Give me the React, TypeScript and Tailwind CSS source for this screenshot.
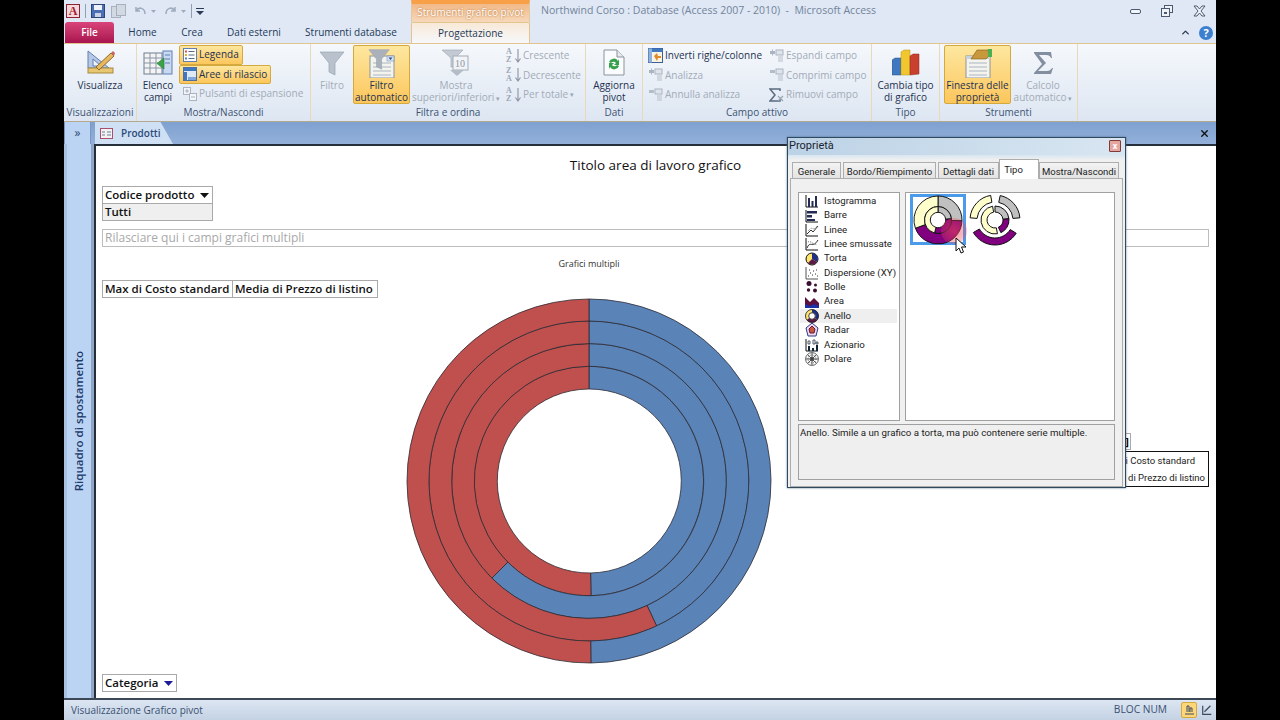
import React from 'react';
import { ChevronUp, X } from 'lucide-react';

const FONT = "font-['Open_Sans','Noto_Sans',sans-serif]";

// ─── Donut geometry ─────────────────────────────────────────────────────────

function arc(cx: number, cy: number, r0: number, r1: number, a0: number, a1: number): string {
  const pt = (r: number, a: number) => {
    const t = ((a - 90) * Math.PI) / 180;
    return `${(cx + r * Math.cos(t)).toFixed(2)} ${(cy + r * Math.sin(t)).toFixed(2)}`;
  };
  const large = a1 - a0 > 180 ? 1 : 0;
  return `M${pt(r1, a0)}A${r1} ${r1} 0 ${large} 1 ${pt(r1, a1)}L${pt(r0, a1)}A${r0} ${r0} 0 ${large} 0 ${pt(r0, a0)}Z`;
}

const RINGS = [
  { r0: 92, r1: 114.7, split: 179 },
  { r0: 114.7, r1: 137.4, split: 225 },
  { r0: 137.4, r1: 160, split: 155 },
  { r0: 160, r1: 182, split: 179.4 },
];

function PivotDonut() {
  return (
    <svg width="368" height="368" viewBox="0 0 368 368">
      {RINGS.map((ring) => (
        <g key={ring.r0} stroke="#2c2a33" strokeWidth="0.8">
          <path d={arc(184, 184, ring.r0, ring.r1, 0, ring.split)} fill="#5a84b8" />
          <path d={arc(184, 184, ring.r0, ring.r1, ring.split, 360)} fill="#c0504d" />
        </g>
      ))}
    </svg>
  );
}

const Y = '#ffffcc';
const P = '#800080';
const S = '#c0c0c0';

function MiniDonut() {
  return (
    <svg width="50" height="50" viewBox="0 0 52 52">
      <g stroke="#111" strokeWidth="1">
        <path d={arc(26, 26, 14, 25, 0, 92)} fill={S} />
        <path d={arc(26, 26, 14, 25, 92, 250)} fill={P} />
        <path d={arc(26, 26, 14, 25, 250, 360)} fill={Y} />
        <path d={arc(26, 26, 8, 14, 0, 85)} fill={S} />
        <path d={arc(26, 26, 8, 14, 85, 195)} fill={P} />
        <path d={arc(26, 26, 8, 14, 195, 360)} fill={Y} />
      </g>
    </svg>
  );
}

function ExplodedDonut() {
  return (
    <svg width="52" height="52" viewBox="0 0 52 52">
      <g stroke="#111" strokeWidth="1">
        <path d={arc(26, 26, 18, 25, 12, 85)} fill={S} />
        <path d={arc(26, 26, 18, 25, 122, 240)} fill={P} />
        <path d={arc(26, 26, 18, 25, 275, 350)} fill={Y} />
        <path d={arc(26, 26, 8, 14, 0, 85)} fill={S} />
        <path d={arc(26, 26, 8, 14, 85, 155)} fill={P} />
        <path d={arc(26, 26, 8, 14, 170, 350)} fill={Y} />
      </g>
    </svg>
  );
}

// ─── Ribbon icons ───────────────────────────────────────────────────────────

const Funnel = ({ c = '#b9c2cc' }: { c?: string }) => (
  <path d="M1 2h24l-9 11v12l-6-3v-9z" fill={c} stroke="#98a3b0" strokeWidth="0.7" />
);

const Sheet = () => (
  <g>
    <rect x="3" y="8" width="24" height="22" fill="#f4f4ef" stroke="#8d949c" />
    <path d="M6 15h18M6 19h18M6 23h18M6 27h18" stroke="#aab4c2" />
  </g>
);

const VisualizzaIcon = () => (
  <svg width="30" height="30" viewBox="0 0 30 30">
    <path d="M3 3l21 17H3z" fill="#b6c8e4" stroke="#5f7fb5" />
    <path d="M8 11l8 7H8z" fill="#eef3fa" stroke="#5f7fb5" />
    <rect x="3" y="20" width="25" height="5" fill="#e8c773" stroke="#a88a3e" />
    <path d="M11 19L26 5l3 3-15 14z" fill="#e9b85c" stroke="#8a6a2c" />
    <path d="M26 5l3 3 1-3-2-2z" fill="#c66" />
  </svg>
);

const ElencoIcon = () => (
  <svg width="30" height="28" viewBox="0 0 30 28">
    <rect x="1" y="4" width="18" height="21" fill="#f4f4f4" stroke="#6f7c8c" />
    <path d="M1 9h18M1 14h18M1 19h18M7 4v21M13 4v21" stroke="#8995a5" />
    <rect x="20" y="2" width="9" height="23" fill="#c9daf0" stroke="#5f7fb5" />
    <path d="M22 6h5M22 10h5M22 14h5" stroke="#5f7fb5" />
    <path d="M21 9v11l-7-5.5z" fill="#3aa34a" stroke="#1f7a30" strokeWidth="0.6" />
  </svg>
);

const LegendaIcon = () => (
  <svg width="14" height="14" viewBox="0 0 14 14">
    <rect x="0.5" y="0.5" width="13" height="13" fill="#fff" stroke="#5f7fb5" />
    <rect x="2" y="2.5" width="2" height="2" fill="#d9534f" />
    <rect x="2" y="6" width="2" height="2" fill="#e9b12f" />
    <rect x="2" y="9.5" width="2" height="2" fill="#4f81bd" />
    <path d="M5.5 3.5h6M5.5 7h6M5.5 10.5h6" stroke="#5a6a80" />
  </svg>
);

const AreeIcon = () => (
  <svg width="14" height="14" viewBox="0 0 14 14">
    <rect x="0.5" y="0.5" width="13" height="13" fill="#dfe9f6" stroke="#4f6f9f" />
    <rect x="1" y="1" width="12" height="3" fill="#3f78c0" />
    <rect x="1" y="5" width="3" height="8" fill="#3f78c0" />
    <rect x="5" y="10" width="8" height="3" fill="#7ea6d8" />
  </svg>
);

const ExpandIcon = () => (
  <svg width="14" height="14" viewBox="0 0 14 14" fill="#f3f5f8" stroke="#aab3bf">
    <rect x="0.5" y="0.5" width="7" height="7" />
    <rect x="6.5" y="6.5" width="7" height="7" />
    <path d="M2 4h4M4 2v4M8 10h4" />
  </svg>
);

const SortIcon = ({ top, bottom }: { top: string; bottom: string }) => (
  <span className="relative flex h-4 w-[15px] flex-col items-start font-['Liberation_Serif',serif] text-[8px] font-bold leading-[8px] text-[#9ba6b5]">
    <span>{top}</span>
    <span>{bottom}</span>
    <svg className="absolute right-0 top-0" width="6" height="16" viewBox="0 0 6 16">
      <path d="M3 1v12M0.5 10.5L3 14l2.5-3.5" fill="none" stroke="#8b95a3" strokeWidth="1.1" />
    </svg>
  </span>
);

const PivotFieldIcon = ({ plain }: { plain?: boolean }) => (
  <svg width="15" height="14" viewBox="0 0 15 14">
    <path d="M1 2h5v3H1z" fill={plain ? '#b3bcc8' : '#aab4c2'} />
    {!plain && <path d="M3.5 0.5v6M1 3.5h5" stroke="#aab4c2" />}
    <rect x="7" y="1" width="7" height="5" fill="#dfe4ea" stroke="#aab4c2" />
    <path d="M9 8h5M9 10h5M9 12h5" stroke="#b7bfca" />
  </svg>
);

const InvertIcon = () => (
  <svg width="15" height="15" viewBox="0 0 15 15">
    <rect x="0.5" y="0.5" width="14" height="14" fill="#f8f3e3" stroke="#3a5f94" />
    <rect x="0.5" y="0.5" width="14" height="3.5" fill="#3f78c0" />
    <rect x="0.5" y="0.5" width="3.5" height="14" fill="#8fb2de" />
    <path d="M6 8l3-3 1 3h3v2h-3l-1 3z" fill="#e08a2c" />
  </svg>
);

const RemoveFieldIcon = () => (
  <svg width="15" height="14" viewBox="0 0 15 14">
    <path d="M11 3V1H1l5 6-5 6h10v-2" fill="none" stroke="#5a6a80" strokeWidth="1.5" />
    <path d="M9 8l5 5M14 8l-5 5" stroke="#9aa5b3" strokeWidth="1.2" />
  </svg>
);

const TopTenIcon = () => (
  <svg width="30" height="28" viewBox="0 0 30 28">
    <path d="M1 1h21l-8 8v9h-4V9z" fill="#c3cad3" stroke="#a2acb8" strokeWidth="0.7" />
    <rect x="12" y="7" width="15" height="14" fill="#f1f3f6" stroke="#a2acb8" />
    <text x="14" y="18" fontSize="10" fontFamily="Liberation Serif, serif" fill="#8b95a3">
      10
    </text>
    <path d="M9 21h14l-7 6z" fill="#b4bcc7" />
  </svg>
);

const RefreshIcon = () => (
  <svg width="24" height="27" viewBox="0 0 24 27">
    <path d="M2 1h13l7 7v18H2z" fill="#fafbfc" stroke="#8b939c" />
    <path d="M15 1v7h7" fill="#e6e9ed" stroke="#8b939c" />
    <path d="M7 13a5 5 0 0 1 9-1l1-2v6h-5l2-2a3 3 0 0 0-5 0z" fill="#35a04a" />
    <path d="M17 17a5 5 0 0 1-9 1l-1 2v-6h5l-2 2a3 3 0 0 0 5 0z" fill="#35a04a" />
  </svg>
);

const ChartTypeIcon = () => (
  <svg width="28" height="28" viewBox="0 0 28 28">
    <path d="M0 11l3-2h6v17H0z" fill="#3f78c0" stroke="#2b5288" strokeWidth="0.5" />
    <path d="M9 3l3-2h6v25H9z" fill="#f1c62f" stroke="#b0901a" strokeWidth="0.5" />
    <path d="M18 7l3-2h6v20l-9 1z" fill="#c9402f" stroke="#8a2a1f" strokeWidth="0.5" />
  </svg>
);

const PropertySheetIcon = () => (
  <svg width="30" height="30" viewBox="0 0 30 30">
    <Sheet />
    <rect x="3" y="8" width="24" height="3" fill="#c9d2dc" />
    <path d="M8 11l6-9h11l1 6-3 3z" fill="#c8983c" stroke="#7d5d1e" strokeWidth="0.6" />
    <rect x="25" y="1" width="4" height="8" fill="#4caf50" />
  </svg>
);

const FilterAutoIcon = () => (
  <svg width="30" height="30" viewBox="0 0 30 30">
    <Sheet />
    <rect x="20" y="8" width="7" height="5" fill="#dbe6f4" stroke="#5f7fb5" strokeWidth="0.5" />
    <path d="M21.5 9.5h4L23.5 12z" fill="#2d4f86" />
    <g transform="translate(1 0) scale(0.85)">
      <Funnel c="#aab1ba" />
    </g>
  </svg>
);

const SigmaIcon = () => (
  <svg width="20" height="24" viewBox="0 0 20 24">
    <path d="M1 1h17l1 6h-1c-1-2-2-3-5-3H6l7 8-8 8h9c2 0 4-1 5-3h1l-2 6H1v-1l8-9L1 2z" fill="#838ea0" />
  </svg>
);

function TypeIcon({ kind }: { kind: string }) {
  const k = '#111';
  const common = { width: 14, height: 14, viewBox: '0 0 14 14' };
  switch (kind) {
    case 'Istogramma':
      return (
        <svg {...common}>
          <path d="M1 1v12h12" fill="none" stroke={k} />
          <path d="M3 4h2v9H3zM6.5 7h2v6h-2zM10 2h2v11h-2z" fill="#222a55" />
        </svg>
      );
    case 'Barre':
      return (
        <svg {...common}>
          <path d="M1 1v12h12" fill="none" stroke={k} />
          <path d="M2 2h10v2.500H2zM2 6h5v2.500H2zM2 10h8v2H2z" fill="#222a55" />
        </svg>
      );
    case 'Linee':
      return (
        <svg {...common}>
          <path d="M1 1v12h12" fill="none" stroke={k} />
          <path d="M2 11l4-4 2 2 5-6" fill="none" stroke="#333" />
          <path d="M3 8l3-3 3 1 3-3" fill="none" stroke="#777" strokeDasharray="1 1" />
        </svg>
      );
    case 'Linee smussate':
      return (
        <svg {...common}>
          <path d="M1 1v12h12" fill="none" stroke={k} />
          <path d="M2 11C5 3 8 12 13 3" fill="none" stroke="#333" />
          <path d="M3 5c3-2 6 4 9 2" fill="none" stroke="#777" strokeDasharray="1 1" />
        </svg>
      );
    case 'Torta':
      return (
        <svg {...common}>
          <circle cx="7" cy="7" r="6" fill="#ffe66a" stroke={k} />
          <path d="M7 7V1a6 6 0 0 1 5 9z" fill="#1f2f86" />
          <path d="M7 7l5 3a6 6 0 0 1-9 1z" fill="#5c1a4a" />
        </svg>
      );
    case 'Dispersione (XY)':
      return (
        <svg {...common}>
          <path d="M1 1v12h12" fill="none" stroke="#555" />
          <path d="M3 10h1M5 7h1M7 9h1M8 5h1M11 4h1M10 8h1M4 4h1M12 10h1" stroke="#333" strokeDasharray="1 1" />
        </svg>
      );
    case 'Bolle':
      return (
        <svg {...common}>
          <circle cx="4" cy="3.500" r="2.500" fill="#3a1030" />
          <circle cx="10.500" cy="5" r="1.500" fill="#3a1030" />
          <circle cx="3.500" cy="10" r="1.700" fill="#3a1030" />
          <circle cx="10" cy="10.500" r="2" fill="#3a1030" />
        </svg>
      );
    case 'Area':
      return (
        <svg {...common}>
          <path d="M0 13V2l5 5 4-4 5 5v5z" fill="#5c1040" />
          <path d="M0 13V9l5 2 4-2 5 2v2z" fill="#1a2fa8" />
        </svg>
      );
    case 'Anello':
      return (
        <svg {...common}>
          <circle cx="7" cy="7" r="5" fill="none" stroke="#ffe66a" strokeWidth="3" />
          <path d="M7 2a5 5 0 0 1 4 8" fill="none" stroke="#1f2f86" strokeWidth="3" />
          <path d="M11 10a5 5 0 0 1-8 0" fill="none" stroke="#5c1a4a" strokeWidth="3" />
          <circle cx="7" cy="7" r="6.500" fill="none" stroke={k} strokeWidth="0.8" />
          <circle cx="7" cy="7" r="3.300" fill="#fff" stroke={k} strokeWidth="0.8" />
        </svg>
      );
    case 'Radar':
      return (
        <svg {...common}>
          <path d="M7 0l6 5-2 8H3L1 5z" fill="#f2d9e6" stroke="#2a3a90" />
          <path d="M7 3l3 3-1 4H5L4 6z" fill="#c9553a" stroke="#5c1a4a" />
        </svg>
      );
    case 'Azionario':
      return (
        <svg {...common}>
          <path d="M1 1v12h12" fill="none" stroke={k} />
          <path d="M3 8h2v5H3zM7 10h2v3H7zM11 7h2v6h-2z" fill="#123" />
          <path d="M3 3h2v3H3zM8 2h2v4H8zM11 4h2v2h-2z" fill="none" stroke="#123" strokeWidth="0.7" />
        </svg>
      );
    default:
      return (
        <svg {...common} fill="none" stroke="#333" strokeWidth="0.8">
          <circle cx="7" cy="7" r="6.400" />
          <circle cx="7" cy="7" r="4" strokeDasharray="1 1" />
          <circle cx="7" cy="7" r="1.800" />
          <path d="M7 1v12M1 7h12M3 3l8 8M11 3l-8 8" />
        </svg>
      );
  }
}

// ─── Ribbon pieces ──────────────────────────────────────────────────────────

const ACTIVE = 'border border-[#d6a93e] bg-gradient-to-b from-[#fde79f] to-[#fcc65a] rounded-[2px]';

function BigButton({
  icon,
  lines,
  width,
  active,
  disabled,
  caret,
}: {
  icon: React.ReactNode;
  lines: string[];
  width: string;
  active?: boolean;
  disabled?: boolean;
  caret?: boolean;
}) {
  return (
    <div
      className={`flex h-[59px] shrink-0 flex-col items-center text-center text-[10px] leading-[12px] ${width} ${
        active ? ACTIVE : 'border border-transparent'
      } ${disabled ? 'text-[#a2abb7]' : 'text-[#1d3150]'}`}
    >
      <div className="flex h-[33px] shrink-0 items-center justify-center">{icon}</div>
      {lines.map((l, i) => (
        <span key={l} className="whitespace-nowrap">
          {l}
          {caret && i === lines.length - 1 && <span className="text-[7px] text-[#9aa5b3]"> ▾</span>}
        </span>
      ))}
    </div>
  );
}

function SmallButton({
  icon,
  label,
  active,
  disabled,
  caret,
}: {
  icon: React.ReactNode;
  label: string;
  active?: boolean;
  disabled?: boolean;
  caret?: boolean;
}) {
  return (
    <div
      className={`flex h-[19.500px] w-fit items-center gap-[2px] whitespace-nowrap pl-[2px] pr-[3px] text-[10px] ${
        active ? ACTIVE : 'border border-transparent'
      } ${disabled ? 'text-[#a2abb7]' : 'text-[#1d3150]'}`}
    >
      <span className="flex w-[15px] items-center justify-center">{icon}</span>
      {label}
      {caret && <span className="text-[7px] text-[#9aa5b3]">▾</span>}
    </div>
  );
}

function Group({
  label,
  width,
  children,
}: {
  label: string;
  width: string;
  children: React.ReactNode;
}) {
  return (
    <div className={`flex h-full shrink-0 flex-col border-r border-r-[#e8d9b8] ${width}`}>
      <div className="flex h-[62px] items-start pt-[1px]">{children}</div>
      <div className="text-center text-[10px] leading-[13px] text-[#3d5373]">{label}</div>
    </div>
  );
}

function Ribbon() {
  return (
    <div className="flex h-[78px] border-t border-[#e3c48d] bg-gradient-to-b from-[#f5f8fc] via-[#e9eff7] to-[#dde6f2]">
      <Group label="Visualizzazioni" width="w-[73px]">
        <BigButton icon={<VisualizzaIcon />} lines={['Visualizza']} width="w-full" />
      </Group>
      <Group label="Mostra/Nascondi" width="w-[174px]">
        <BigButton icon={<ElencoIcon />} lines={['Elenco', 'campi']} width="w-[42px]" />
        <div className="flex flex-col">
          <SmallButton icon={<LegendaIcon />} label="Legenda" active />
          <SmallButton icon={<AreeIcon />} label="Aree di rilascio" active />
          <SmallButton icon={<ExpandIcon />} label="Pulsanti di espansione" disabled />
        </div>
      </Group>
      <Group label="Filtra e ordina" width="w-[275px]">
        <BigButton
          icon={
            <svg width="26" height="26" viewBox="0 0 26 26">
              <Funnel />
            </svg>
          }
          lines={['Filtro']}
          width="w-[42px]"
          disabled
        />
        <BigButton icon={<FilterAutoIcon />} lines={['Filtro', 'automatico']} width="w-[57px]" active />
        <BigButton
          icon={<TopTenIcon />}
          lines={['Mostra', 'superiori/inferiori']}
          width="w-[92px]"
          disabled
          caret
        />
        <div className="flex flex-col pl-[1px] pt-[1px]">
          <SmallButton icon={<SortIcon top="A" bottom="Z" />} label="Crescente" disabled />
          <SmallButton icon={<SortIcon top="Z" bottom="A" />} label="Decrescente" disabled />
          <SmallButton icon={<SortIcon top="A" bottom="Z" />} label="Per totale" disabled caret />
        </div>
      </Group>
      <Group label="Dati" width="w-[57px]">
        <BigButton icon={<RefreshIcon />} lines={['Aggiorna', 'pivot']} width="w-full" />
      </Group>
      <Group label="Campo attivo" width="w-[229px]">
        <div className="flex w-[123px] flex-col pl-[2px] pt-[1px]">
          <SmallButton icon={<InvertIcon />} label="Inverti righe/colonne" />
          <SmallButton icon={<PivotFieldIcon />} label="Analizza" disabled />
          <SmallButton icon={<PivotFieldIcon plain />} label="Annulla analizza" disabled />
        </div>
        <div className="flex flex-col pt-[1px]">
          <SmallButton icon={<PivotFieldIcon />} label="Espandi campo" disabled />
          <SmallButton icon={<PivotFieldIcon plain />} label="Comprimi campo" disabled />
          <SmallButton icon={<RemoveFieldIcon />} label="Rimuovi campo" disabled />
        </div>
      </Group>
      <Group label="Tipo" width="w-[68px]">
        <BigButton icon={<ChartTypeIcon />} lines={['Cambia tipo', 'di grafico']} width="w-full" />
      </Group>
      <Group label="Strumenti" width="w-[138px]">
        <div className="w-[4px]" />
        <BigButton
          icon={<PropertySheetIcon />}
          lines={['Finestra delle', 'proprietà']}
          width="w-[67px]"
          active
        />
        <BigButton icon={<SigmaIcon />} lines={['Calcolo', 'automatico']} width="w-[64px]" disabled caret />
      </Group>
    </div>
  );
}

function TitleBar() {
  return (
    <div className="flex h-[22px] items-stretch">
      <div className="flex w-[347px] items-center pl-[2px]">
        <span className="flex h-[14px] w-[14px] items-center justify-center border border-[#8c2330] bg-[#f4d8dc] font-['Liberation_Serif',serif] text-[12px] font-bold leading-none text-[#a31c2f]">
          A
        </span>
        <span className="mx-[5px] h-[14px] w-px bg-[#8f9fb5]" />
        <svg width="14" height="14" viewBox="0 0 14 14">
          <rect x="0.5" y="0.5" width="13" height="13" fill="#4a6fb5" stroke="#2d4679" />
          <rect x="3" y="1" width="8" height="5" fill="#eef2f8" />
          <rect x="4" y="9" width="6" height="4" fill="#c8d2e2" />
        </svg>
        <svg className="ml-[6px]" width="15" height="14" viewBox="0 0 15 14" fill="#d3d9e2" stroke="#a6b0be">
          <rect x="0.500" y="2.500" width="9" height="11" />
          <rect x="5.500" y="0.500" width="9" height="11" />
        </svg>
        <svg className="ml-[8px]" width="24" height="12" viewBox="0 0 24 12" fill="none" stroke="#9eabbd" strokeWidth="1.500">
          <path d="M2 2v4h4M2 6c3-5 9-3 9 3" />
          <path d="M17 5l2.500 3L22 5z" fill="#9eabbd" stroke="none" />
        </svg>
        <svg className="ml-[6px]" width="24" height="12" viewBox="0 0 24 12" fill="none" stroke="#9eabbd" strokeWidth="1.500">
          <path d="M11 2v4H7M11 6C8 1 2 3 2 9" />
          <path d="M17 5l2.500 3L22 5z" fill="#9eabbd" stroke="none" />
        </svg>
        <span className="mx-[3px] h-[14px] w-px bg-[#8f9fb5]" />
        <svg width="10" height="10" viewBox="0 0 10 10">
          <path d="M1 2h8v1H1zM1 5h8L5 9z" fill="#2b3a55" />
        </svg>
      </div>
      <div className="w-[119px] border-x border-[#e2c9a0] border-t-[4px] border-t-[#f7a048] bg-gradient-to-b from-[#f2b988] to-[#f6d8ba] text-center text-[10px] leading-[17px] text-white [text-shadow:0_0_2px_#a8621f]">
        Strumenti grafico pivot
      </div>
      <div className="flex-1 pl-[11px] text-[10.500px] leading-[21px] text-[#73849c]">
        Northwind Corso : Database (Access 2007 - 2010) &nbsp;-&nbsp; Microsoft Access
      </div>
      <div className="flex w-[86px] items-center justify-between pr-[10px] text-[#4b5a70]">
        <svg width="11" height="5" viewBox="0 0 11 5">
          <rect x="0.500" y="0.500" width="10" height="4" rx="1.500" fill="#f2f5f9" stroke="#4b5a70" />
        </svg>
        <svg width="12" height="12" viewBox="0 0 12 12" fill="#eef2f7" stroke="#4b5a70">
          <rect x="3.500" y="0.500" width="8" height="7" />
          <rect x="0.500" y="3.500" width="8" height="8" />
          <rect x="3" y="7" width="3" height="2" fill="#4b5a70" stroke="none" />
        </svg>
        <svg width="13" height="12" viewBox="0 0 13 12">
          <path d="M1 1h3l2.500 3L9 1h3L8 6l4 5H9L6.500 8 4 11H1l4-5z" fill="#eef2f7" stroke="#4b5a70" />
        </svg>
      </div>
    </div>
  );
}

const MENU_TABS = [
  { label: 'Home', w: 'w-[57px]' },
  { label: 'Crea', w: 'w-[42px]' },
  { label: 'Dati esterni', w: 'w-[82px]' },
  { label: 'Strumenti database', w: 'w-[112px]' },
];

function TabStrip() {
  return (
    <div className="flex h-[21px] items-stretch text-[10px] text-[#24395a]">
      <div className="ml-[1px] w-[49px] rounded-t-[3px] bg-gradient-to-b from-[#d9447a] to-[#a8134f] text-center font-semibold leading-[20px] text-white">
        File
      </div>
      {MENU_TABS.map((t) => (
        <div key={t.label} className={`${t.w} text-center leading-[20px]`}>
          {t.label}
        </div>
      ))}
      <div className="ml-[4px] w-[119px] rounded-t-[2px] border-x border-t border-[#e3c48d] bg-gradient-to-b from-[#f8e9d8] to-[#f6f8fb] text-center leading-[20px]">
        Progettazione
      </div>
      <div className="flex flex-1 items-center justify-end gap-[8px] pr-[3px]">
        <ChevronUp className="size-[11px] text-[#2b3a55]" strokeWidth={3} />
        <span className="flex size-[14px] items-center justify-center rounded-full bg-[#3d7fcf] text-[11px] font-bold leading-none text-white">
          ?
        </span>
      </div>
    </div>
  );
}

// ─── Properties window ──────────────────────────────────────────────────────

const PROP_TABS = [
  { label: 'Generale', w: 'w-[49px] ml-[4px]' },
  { label: 'Bordo/Riempimento', w: 'w-[93px] ml-[2px]' },
  { label: 'Dettagli dati', w: 'w-[61px] ml-[2px]' },
  { label: 'Tipo', w: 'w-[40px] pr-[11px]', active: true },
  { label: 'Mostra/Nascondi', w: 'w-[80px]' },
];

const CHART_TYPES = [
  'Istogramma',
  'Barre',
  'Linee',
  'Linee smussate',
  'Torta',
  'Dispersione (XY)',
  'Bolle',
  'Area',
  'Anello',
  'Radar',
  'Azionario',
  'Polare',
];

function PropertiesWindow() {
  return (
    <div className="absolute left-[691px] top-[-9px] flex h-[351px] w-[339px] flex-col border border-[#31495f] bg-[#f0f0f0] font-['Roboto',sans-serif] text-[9.700px] text-[#222] shadow-[0_0_2px_rgba(60,100,130,0.8)]">
      <div className="flex h-[18px] items-center justify-between bg-gradient-to-r from-[#bcd2e6] to-[#d8e6f1] pl-[1px] pr-[4px] text-[11px] text-[#1a2430]">
        Proprietà
        <span className="flex size-[12px] items-center justify-center rounded-[1px] border border-[#7f3b3b] bg-[#e7a5a0] text-[9px] font-bold leading-none text-white">
          x
        </span>
      </div>
      <div className="flex h-[7px] bg-gradient-to-b from-[#d8e6f1] to-[#f0f0f0]" />
      <div className="flex h-[18px] items-end text-[9.500px]">
        {PROP_TABS.map((t) => (
          <div
            key={t.label}
            className={`whitespace-nowrap border border-[#adadad] text-center ${t.w} ${
              t.active
                ? 'relative z-10 -mb-px h-[20px] border-b-0 bg-white leading-[20px]'
                : 'h-[16px] border-b-0 bg-gradient-to-b from-[#f3f3f3] to-[#e3e3e3] leading-[17px]'
            }`}
          >
            {t.label}
          </div>
        ))}
      </div>
      <div className="mx-[2px] flex flex-1 flex-col gap-[3px] border border-[#adadad] bg-[#f0f0f0] px-[7px] pb-[6px] pt-[13px]">
        <div className="flex h-[229px] gap-[5px]">
          <div className="w-[102px] border border-[#a0a0a0] bg-white pt-[1px] pl-[1px] pr-[2px]">
            {CHART_TYPES.map((name) => (
              <div
                key={name}
                className={`flex h-[14.360px] items-center gap-[5px] whitespace-nowrap pl-[5px] ${
                  name === 'Anello' ? 'bg-[#efefef]' : ''
                }`}
              >
                <TypeIcon kind={name} />
                {name}
              </div>
            ))}
          </div>
          <div className="relative flex flex-1 items-start gap-[3px] border border-[#a0a0a0] bg-white pl-[4px] pt-[1px]">
            <div className="flex h-[51px] w-[56px] items-center justify-center border-[3px] border-[#4a9bea]">
              <MiniDonut />
            </div>
            <ExplodedDonut />
            {/* click halo and mouse pointer */}
            <span className="absolute left-[35px] top-[25px] size-[26px] rounded-full bg-[radial-gradient(circle,rgba(235,70,90,0.6),rgba(235,70,90,0.15))]" />
            <svg className="absolute left-[49px] top-[44px]" width="14" height="18" viewBox="0 0 14 18">
              <path d="M1 1v13l3-3 2 5 2.500-1-2-5h4.500z" fill="#fff" stroke="#111" />
            </svg>
          </div>
        </div>
        <div className="h-[56px] border border-[#a0a0a0] bg-[#efefef] pl-[1px] pt-[1px] leading-[14px]">
          Anello. Simile a un grafico a torta, ma può contenere serie multiple.
        </div>
      </div>
    </div>
  );
}

// ─── Pivot chart area ───────────────────────────────────────────────────────

function Chip({ children, className = '' }: { children: React.ReactNode; className?: string }) {
  return (
    <div
      className={`flex h-[18px] items-center whitespace-nowrap border border-[#a9a9a9] pl-[2px] text-[11.500px] font-semibold text-[#111] ${className}`}
    >
      {children}
    </div>
  );
}

const Caret = ({ c = '#111' }: { c?: string }) => (
  <svg className="ml-[6px]" width="9" height="5" viewBox="0 0 9 5">
    <path d="M0 0h9L4.500 5z" fill={c} />
  </svg>
);

function PivotArea() {
  return (
    <div className="relative flex flex-1 flex-col border-l-2 border-t-2 border-[#26303d] bg-white pl-[6px] pr-[7px]">
      <div className="mt-[10px] h-[18px] text-center text-[13.500px] leading-[18px] text-[#111]">
        Titolo area di lavoro grafico
      </div>
      <div className="mt-[12px] w-[111px]">
        <Chip>
          Codice prodotto
          <Caret />
        </Chip>
        <Chip className="-mt-px bg-[#efefef]">Tutti</Chip>
      </div>
      <div className="mt-[8px] h-[18px] shrink-0 border border-[#bdbdbd] pl-[2px] text-[12px] leading-[16px] text-[#a8a8a8]">
        Rilasciare qui i campi grafici multipli
      </div>
      <div className="flex min-h-0 flex-1">
        <div className="flex w-[974px] shrink-0 flex-col">
          <div className="mt-[11px] text-center text-[9px] leading-[12px] text-[#333]">
            Grafici multipli
          </div>
          <div className="mt-[10px] flex">
            <Chip className="w-[131px]">Max di Costo standard</Chip>
            <Chip className="-ml-px w-[146px]">Media di Prezzo di listino</Chip>
          </div>
          <div className="-mt-[1px] flex justify-center">
            <PivotDonut />
          </div>
          <div className="mt-[9px]">
            <Chip className="w-[75px]">
              Categoria
              <Caret c="#1c1c9c" />
            </Chip>
          </div>
        </div>
        <div className="flex flex-1 flex-col pt-[186px]">
          <div className="flex h-[17px] w-[55px] items-center justify-end border border-[#a9a9a9] pr-[1px] text-[11px] font-bold leading-none">
            ]
          </div>
          <div className="mt-px w-[130px] self-end border border-[#111] text-right font-['Roboto',sans-serif] text-[9.500px] leading-[17px] text-[#222]">
            <div className="whitespace-nowrap pr-[13px]">Max di Costo standard</div>
            <div className="whitespace-nowrap pr-[3px]">Media di Prezzo di listino</div>
          </div>
        </div>
      </div>
      <PropertiesWindow />
    </div>
  );
}

export default function App() {
  return (
    <div className={`flex h-[720px] w-[1280px] overflow-hidden bg-black px-[64px] ${FONT}`}>
      <div className="flex w-[1152px] flex-col bg-[#dfe8f4]">
        <TitleBar />
        <TabStrip />
        <Ribbon />
        <div className="h-[1px] bg-[#b3a98f]" />
        {/* document tab bar */}
        <div className="flex h-[22px] items-stretch bg-gradient-to-b from-[#7fa1d0] to-[#93b0da]">
          <div className="flex w-[27px] items-center justify-center border-x border-[#7c97bd] bg-[#bcd4f3] text-[12px] text-[#2c4770]">
            »
          </div>
          <div className="ml-[4px] flex w-[78px] items-center gap-[8px] bg-[#cfe0f5] pl-[5px] text-[10px] font-semibold text-[#2a4a78] [clip-path:polygon(0_0,84%_0,100%_100%,0_100%)]">
            <svg width="13" height="11" viewBox="0 0 13 11" fill="#f2f2f2" stroke="#a9506f">
              <rect x="0.500" y="0.500" width="12" height="10" />
              <path d="M2 4h3M2 7h3M7 4h4M7 7h4" stroke="#6d7d95" />
            </svg>
            Prodotti
          </div>
          <div className="flex flex-1 items-center justify-end pr-[6px] text-[#111]">
            <X className="size-[11px]" strokeWidth={3} />
          </div>
        </div>
        <div className="flex min-h-0 flex-1">
          <div className="flex w-[30px] shrink-0 items-center justify-center border-l-[3px] border-r-[3px] border-l-[#a9c1e0] border-r-[#8fa6c6] bg-[#bcd4f3]">
            <span className="rotate-180 whitespace-nowrap text-[11.500px] font-semibold text-[#1d3a6b] [writing-mode:vertical-rl]">
              Riquadro di spostamento
            </span>
          </div>
          <PivotArea />
        </div>
        {/* status bar */}
        <div className="flex h-[22px] items-center border-t-2 border-[#3d4857] bg-gradient-to-b from-[#dde6f2] to-[#c4d2e4] pl-[7px] pr-[3px] text-[10px] text-[#3a5072]">
          <span className="flex-1">Visualizzazione Grafico pivot</span>
          <span className="text-[10.200px]">BLOC NUM</span>
          <span className="ml-[14px] flex size-[16px] items-center justify-center rounded-[2px] border border-[#d6a93e] bg-[#fcd679]">
            <svg width="11" height="11" viewBox="0 0 11 11" fill="none" stroke="#3b4a60">
              <path d="M3 7V1h2v6M6 7V3h2v4M1 9h9" />
            </svg>
          </span>
          <svg className="ml-[4px]" width="12" height="12" viewBox="0 0 14 14" fill="none" stroke="#3b4a60">
            <path d="M2 2v10h10M4 9l7-7" strokeWidth="1.400" />
          </svg>
        </div>
      </div>
    </div>
  );
}
